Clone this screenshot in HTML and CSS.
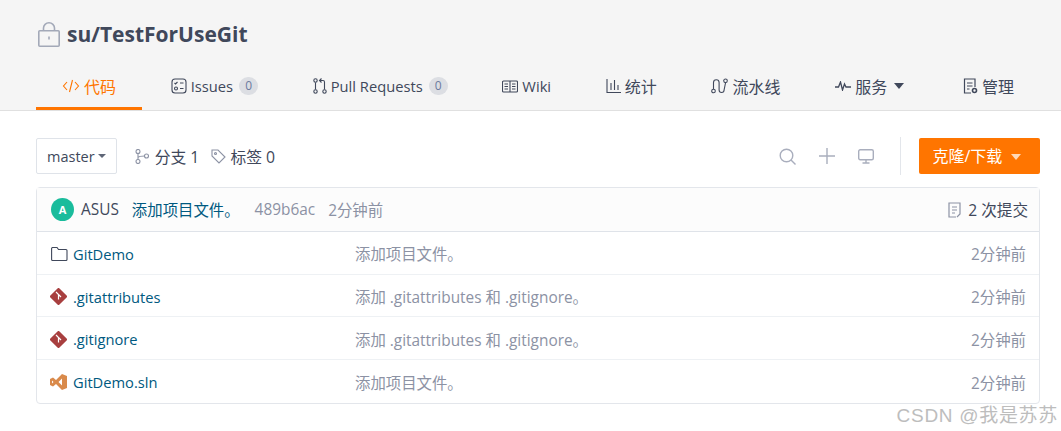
FILE: index.html
```html
<!DOCTYPE html>
<html>
  <head>
    <meta charset="utf-8" />
    <title>su/TestForUseGit</title>
    <link rel="stylesheet" href="styles.css">
  </head>
  <body>
    <div class="header">
      <div class="repoTitle">
        <svg class="lockIcon" width="22" height="25" viewBox="0 0 22 25" fill="none" stroke="#a3a9b8" stroke-width="1.6"><rect x=".8" y="8.800" width="20.400" height="15.400" rx="1"/><path d="M5.500 8.500V6a5.500 5.200 0 0 1 11 0v2.500"/><path d="M11 14.500v3"/></svg>
        <span>su/TestForUseGit</span>
      </div>
      <div class="tabs">
        <a class="tab active">
          <svg width="18" height="14" viewBox="0 0 17 14" fill="none" stroke="#ff7500" stroke-width="1.1"><path d="M4.5 3 1 7l3.500 4M12.500 3 16 7l-3.500 4M10 1 7 13"/></svg>
          代码
        </a>
        <a class="tab">
          <svg width="16" height="16" viewBox="0 0 16 16" fill="none" stroke="#40485b" stroke-width="1.1"><rect x="1" y="1" width="14" height="14" rx="3"/><path d="m3.500 5 1 1 2-2M9 5h3.500M9 10.500h3.500"/><circle cx="5" cy="10.500" r="1.500"/></svg>
          <span class="tabLatin">Issues</span> <span class="count">0</span>
        </a>
        <a class="tab">
          <svg width="14" height="16" viewBox="0 0 14 16" fill="none" stroke="#40485b" stroke-width="1.1"><circle cx="2.500" cy="2.500" r="1.700"/><circle cx="2.500" cy="13.500" r="1.700"/><circle cx="11.500" cy="13.500" r="1.700"/><path d="M2.500 4.500v7M11.500 11.500V4a1.500 1.500 0 0 0-1.500-1.500H7M8.500.5l-2 2 2 2"/></svg>
          <span class="tabLatin">Pull Requests</span> <span class="count">0</span>
        </a>
        <a class="tab">
          <svg width="16" height="13" viewBox="0 0 16 13" fill="none" stroke="#40485b" stroke-width="1.1"><rect x=".5" y="1" width="15" height="11" rx="1"/><path d="M8 1v11M2.500 4h3.500M2.500 6.500h3.500M2.500 9h3.500M10 4h3.500M10 6.500h3.500M10 9h3.500"/></svg>
          <span class="tabLatin">Wiki</span>
        </a>
        <a class="tab">
          <svg width="15" height="14" viewBox="0 0 15 14" fill="none" stroke="#40485b" stroke-width="1.1"><path d="M1 0v13.500h14M5 4v7M8.500 1v10M12 6v5"/></svg>
          统计
        </a>
        <a class="tab">
          <svg width="17" height="16" viewBox="0 0 17 16" fill="none" stroke="#40485b" stroke-width="1.1"><circle cx="2.500" cy="13" r="1.800"/><circle cx="14.500" cy="2.800" r="1.800"/><path d="M2.500 11V4.500a2.800 2.800 0 0 1 5.600 0v7.500a2.500 2.500 0 0 0 5 0l1.400-7"/></svg>
          流水线
        </a>
        <a class="tab">
          <svg width="16" height="10" viewBox="0 0 16 10" fill="none" stroke="#40485b" stroke-width="1.300"><path d="M0 6h3.500L5.500 1l2 8 2-6 1.500 3h5"/></svg>
          服务 <i class="caret menu"></i>
        </a>
        <a class="tab">
          <svg width="15" height="16" viewBox="0 0 15 16" fill="none" stroke="#40485b" stroke-width="1.200"><path d="M8 15H1.500V1H12v8M4 5h5.500M4 8h5.500M4 11h2.500"/><circle cx="11.500" cy="12.500" r="2" stroke-width="1.600"/></svg>
          管理
        </a>
      </div>
    </div>

    <div class="content">
      <div class="toolbar">
        <div class="branchSelect">master <i class="caret small"></i></div>
        <div class="stat">
          <svg width="14" height="15" viewBox="0 0 14 15" fill="none" stroke="#8c92a4" stroke-width="1.100"><circle cx="3" cy="2.500" r="2"/><circle cx="3" cy="12.500" r="2"/><circle cx="11.500" cy="7" r="2"/><path d="M3 4.500v6M3 8.500c1 -1.500 3 -1.500 6.500 -1.500"/></svg>
          分支 1
        </div>
        <div class="stat tight">
          <svg width="15" height="15" viewBox="0 0 15 15" fill="none" stroke="#8c92a4" stroke-width="1.100"><path d="M1 1h6l7 7-6 6-7-7z"/><circle cx="4.500" cy="4.500" r="1"/></svg>
          标签 0
        </div>
        <div class="toolIcons">
          <svg width="17" height="17" viewBox="0 0 17 17" fill="none" stroke="#a9aebd" stroke-width="1.400"><circle cx="7.500" cy="7.500" r="6.300"/><path d="m12 12 4.500 4.500"/></svg>
          <svg width="16" height="16" viewBox="0 0 16 16" fill="none" stroke="#a9aebd" stroke-width="1.400"><path d="M8 0v16M0 8h16"/></svg>
          <svg width="16" height="15" viewBox="0 0 16 15" fill="none" stroke="#a9aebd" stroke-width="1.400"><rect x=".7" y=".7" width="14.600" height="10" rx="1.500"/><path d="M8 11v3M4.500 14h7"/></svg>
        </div>
        <div class="divider"></div>
        <button class="cloneBtn">克隆/下载 <i class="caret light"></i></button>
      </div>

      <div class="fileBox">
        <div class="commitRow">
          <span class="avatar">A</span>
          <span class="author">ASUS</span>
          <a class="commitMsg">添加项目文件。</a>
          <span class="sha">489b6ac</span>
          <span class="sha">2分钟前</span>
          <span class="commitCount">
            <svg width="14" height="16" viewBox="0 0 14 16" fill="none" stroke="#8c92a4" stroke-width="1.200"><path d="M8 15H1V1h11v11l-3 3M4 5h5M4 8h5M4 11h3"/></svg>
            2 次提交
          </span>
        </div>

        <div class="fileRow">
          <span class="fileName">
            <svg class="folderIcon" width="17" height="14" viewBox="0 0 17 14" fill="none" stroke="#40485b" stroke-width="1.100"><path d="M.6 12.500V1.500a1 1 0 0 1 1-1h4.400l1.500 2h7.500a1 1 0 0 1 1 1v9a1 1 0 0 1-1 1H1.600a1 1 0 0 1-1-1z"/></svg>
            GitDemo
          </span>
          <span class="fileMsg">添加项目文件。</span>
          <span class="fileTime">2分钟前</span>
        </div>
        <div class="fileRow">
          <span class="fileName">
            <svg width="17" height="17" viewBox="0 0 17 17"><path fill="#a83f3f" d="M7.500.4a1.400 1.400 0 0 1 2 0l7.100 7.100a1.400 1.400 0 0 1 0 2l-7.100 7.100a1.400 1.400 0 0 1-2 0L.4 9.500a1.400 1.400 0 0 1 0-2z"/><path fill="none" stroke="#fff" stroke-width="1.200" d="m6 4 2.500 2.500v5M8.500 6.500l2.500 2.500"/></svg>
            .gitattributes
          </span>
          <span class="fileMsg">添加 .gitattributes 和 .gitignore。</span>
          <span class="fileTime">2分钟前</span>
        </div>
        <div class="fileRow">
          <span class="fileName">
            <svg width="17" height="17" viewBox="0 0 17 17"><path fill="#a83f3f" d="M7.500.4a1.400 1.400 0 0 1 2 0l7.100 7.100a1.400 1.400 0 0 1 0 2l-7.100 7.100a1.400 1.400 0 0 1-2 0L.4 9.500a1.400 1.400 0 0 1 0-2z"/><path fill="none" stroke="#fff" stroke-width="1.200" d="m6 4 2.500 2.500v5M8.500 6.500l2.500 2.500"/></svg>
            .gitignore
          </span>
          <span class="fileMsg">添加 .gitattributes 和 .gitignore。</span>
          <span class="fileTime">2分钟前</span>
        </div>
        <div class="fileRow">
          <span class="fileName">
            <svg width="17" height="16" viewBox="0 0 17 16"><path fill="#d98a4b" d="M12 0 17 2v12l-5 2-6-6-3 2.500L0 11V5l3-1.500L6 6zM12 4.500 8.500 8l3.500 3.500zM2 6.500v3L3.500 8z"/></svg>
            GitDemo.sln
          </span>
          <span class="fileMsg">添加项目文件。</span>
          <span class="fileTime">2分钟前</span>
        </div>
      </div>
    </div>

    <div class="watermark">CSDN @我是苏苏</div>
  </body>
</html>
```

FILE: styles.css
```css
* {
  box-sizing: border-box;
}
html,
body {
  height: 100%;
}
body {
  margin: 0;
  position: relative;
  overflow: hidden;
  background-color: #fff;
  color: #40485b;
  font-family: "Open Sans", "Noto Sans CJK SC", sans-serif;
  font-size: 15.4px;
}
svg {
  flex: none;
}

/* header */
.header {
  height: 111px;
  padding: 0 21px 0 36px;
  background-color: #f5f5f5;
  border-bottom: 1px solid #e0e0e0;
}
.repoTitle {
  display: flex;
  align-items: center;
  gap: 7px;
  height: 68px;
  font-size: 21px;
  font-weight: 700;
}
.lockIcon {
  margin-left: 2px;
}
.tabs {
  display: flex;
  justify-content: space-between;
  height: 42px;
}
.tab {
  display: flex;
  align-items: center;
  gap: 4px;
  padding: 0 26px 6px;
  height: 42px;
  font-size: 16px;
}
.tab.active {
  color: #ff7500;
  border-bottom: 3px solid #ff7500;
  padding-bottom: 3px;
}
.tabLatin {
  font-size: 14.700px;
}
.count {
  display: inline-block;
  width: 19px;
  height: 18px;
  margin-left: 2px;
  line-height: 18px;
  text-align: center;
  border-radius: 9px;
  background-color: #dcdee3;
  color: #6b7a9e;
  font-size: 12px;
}
.caret {
  display: inline-block;
  margin-left: 3px;
  border-left: 5px solid transparent;
  border-right: 5px solid transparent;
  border-top: 6px solid #40485b;
}
.caret.menu {
  margin-right: 4px;
}
.caret.small {
  margin-left: 0;
  border-left-width: 4px;
  border-right-width: 4px;
  border-top-width: 4px;
  border-top-color: #5f6677;
}
.caret.light {
  margin-left: 4px;
  border-top-color: #ffd9b8;
  vertical-align: 2px;
}

/* toolbar */
.content {
  padding: 27px 21px 0 36px;
}
.toolbar {
  display: flex;
  align-items: center;
  height: 36px;
}
.branchSelect {
  display: flex;
  align-items: center;
  gap: 3px;
  height: 36px;
  padding: 0 10px;
  margin-right: 18px;
  background-color: #fff;
  border: 1px solid #dfe3e9;
  border-radius: 2px;
  font-size: 14.500px;
}
.stat {
  display: flex;
  align-items: center;
  gap: 6px;
  margin-right: 12px;
  font-size: 15.800px;
}
.stat.tight {
  gap: 4px;
}
.toolIcons {
  display: flex;
  align-items: center;
  gap: 23px;
  margin-left: auto;
}
.divider {
  width: 1px;
  height: 38px;
  margin: 0 18px 0 26px;
  background-color: #e3e6eb;
}
.cloneBtn {
  width: 121px;
  height: 36px;
  padding: 0 6px 2px 0;
  border: none;
  border-radius: 2px;
  background-color: #ff7500;
  color: #fff;
  font-family: inherit;
  font-size: 16px;
}

/* file list */
.fileBox {
  margin-top: 13px;
  border: 1px solid #e3e6eb;
  border-radius: 4px;
}
.commitRow {
  display: flex;
  align-items: center;
  height: 44px;
  padding: 0 11px 0 14px;
  background-color: #fcfcfc;
  border-bottom: 1px solid #dfe3e9;
}
.avatar {
  width: 23px;
  height: 23px;
  margin-right: 7px;
  line-height: 23px;
  text-align: center;
  border-radius: 50%;
  background-color: #1abc9c;
  color: #fff;
  font-size: 11px;
  font-weight: 700;
}
.author {
  margin-right: 13px;
}
.commitMsg {
  margin-right: 15px;
  color: #005980;
}
.sha {
  margin-right: 13px;
  color: #8c92a4;
}
.commitCount {
  display: flex;
  align-items: center;
  gap: 6px;
  margin-left: auto;
  font-size: 15.600px;
}
.fileRow {
  display: flex;
  align-items: center;
  height: 42.700px;
  padding: 2px 13px 0 13px;
  border-bottom: 1px solid #eef1f4;
}
.fileRow:last-child {
  border-bottom: none;
}
.fileName {
  display: flex;
  align-items: center;
  gap: 6px;
  width: 305px;
  color: #005980;
  font-size: 14.700px;
}
.folderIcon {
  margin: 0 -1px 0 1px;
}
.fileMsg {
  flex: 1;
  color: #8c92a4;
}
.fileTime {
  color: #8c92a4;
}

/* sits over the page corner */
.watermark {
  position: absolute;
  right: 3px;
  bottom: 4px;
  color: #bdbdbd;
  font-family: "Liberation Sans", "Noto Sans CJK SC", sans-serif;
  font-size: 19px;
  letter-spacing: 0.700px;
}
```
